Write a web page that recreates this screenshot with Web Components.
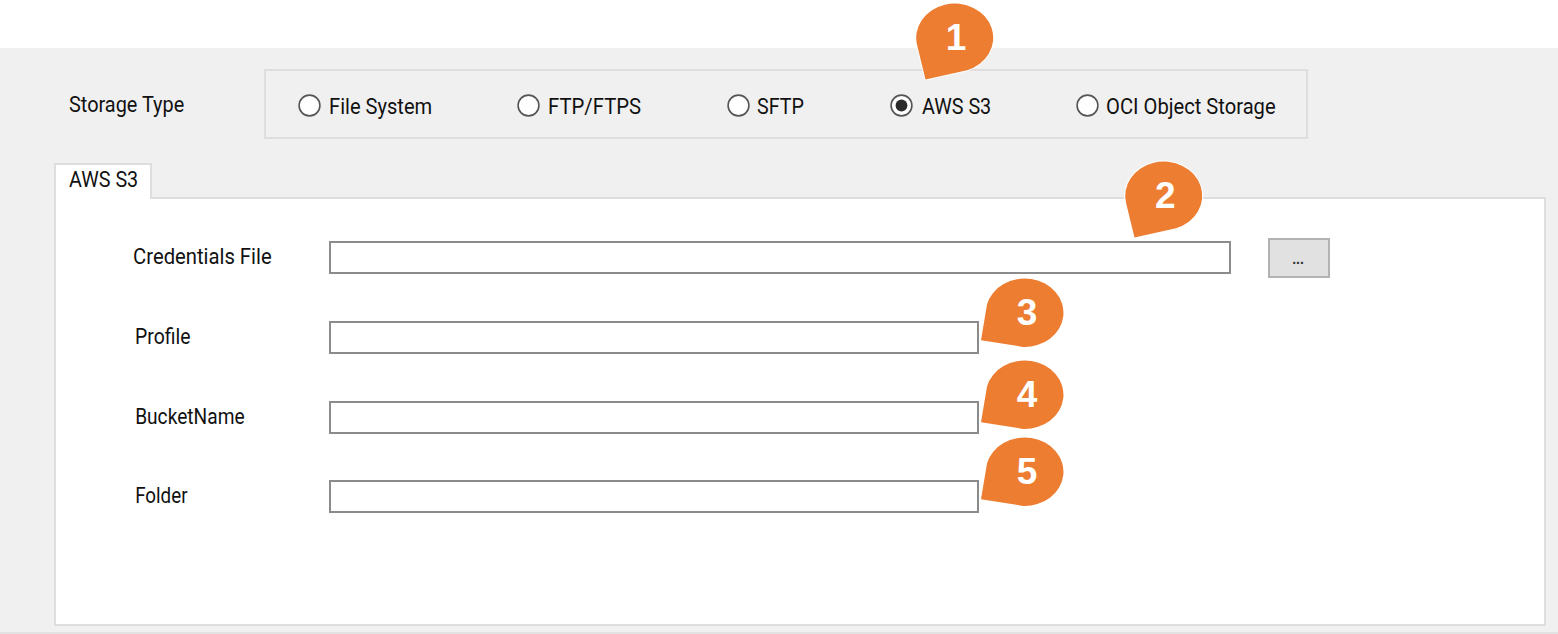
<!DOCTYPE html>
<html lang="en">
<head>
<meta charset="utf-8">
<title>Storage settings</title>
<style>
html,body{margin:0;height:100%;overflow:hidden;background:#fff}
</style>
</head>
<body>
<storage-page></storage-page>
<script>
const define=(name,html,setup)=>{
  const t=document.createElement('template');
  t.innerHTML=html;
  customElements.define(name,class extends HTMLElement{
    constructor(){super();this.attachShadow({mode:'open'}).appendChild(t.content.cloneNode(true));}
    connectedCallback(){if(setup)setup(this,this.shadowRoot);}
  });
};

/* One-line caption condensed so that its ink spans exactly `w` pixels. */
const ctx=document.createElement('canvas').getContext('2d');
define('fit-label',`<style>
:host{display:block;height:26px;font:22px/26px Roboto,"Liberation Sans",sans-serif;color:#111;white-space:pre;flex:none}
span{display:inline-block;transform-origin:0 0}
</style><span><slot></slot></span>`,(el,root)=>{
  const w=+el.getAttribute('w');
  ctx.font='22px Roboto, "Liberation Sans", sans-serif';
  const m=ctx.measureText(el.textContent);
  const s=w/(m.actualBoundingBoxLeft+m.actualBoundingBoxRight);
  el.style.width=w+'px';
  root.querySelector('span').style.transform=`translateX(${m.actualBoundingBoxLeft*s}px) scaleX(${s})`;
});

define('radio-option',`<style>
:host{display:flex;align-items:flex-start;position:static}
svg{display:block;flex:none;margin-right:var(--gap,9px)}
.dot{display:none}
:host([checked]) .dot{display:block}
</style><svg width="23" height="23" viewBox="0 0 23 23"><circle cx="11.5" cy="11.5" r="10.4" fill="#fff" stroke="#555" stroke-width="1.6"/><circle class="dot" cx="11.5" cy="11.5" r="5.9" fill="#2b2b2b"/></svg><slot></slot>`);

define('option-group',`<style>
:host{display:grid;grid-template-columns:219.5px 209.5px 163.3px 185.9px auto;box-sizing:border-box;width:1044px;height:70px;border:2px solid #dedede;padding:23px 0 0 31.5px;align-items:start}
</style><slot></slot>`);

define('text-field',`<style>
:host{display:block;box-sizing:border-box;height:33px;border:2px solid #8b8b8b;background:#fff}
</style>`,el=>{el.style.width=el.getAttribute('w')+'px';});

define('browse-button',`<style>
:host{display:flex;justify-content:center;box-sizing:border-box;width:62px;height:40px;margin:-3px 0 0 37px;border:2px solid #b2b2b2;background:#e1e1e1;font:bold 14px/39px "Liberation Sans",sans-serif;color:#333;padding-right:2px}
</style><slot></slot>`);

define('form-row',`<style>
:host{display:flex;align-items:flex-start}
.cap{flex:none;width:195px;padding-top:3px}
</style><div class="cap"><slot name="label"></slot></div><slot></slot>`);

define('tab-panel',`<style>
:host{display:block;width:1492px}
.tab{position:relative;z-index:1;box-sizing:border-box;width:98px;height:36px;margin-bottom:-2px;border:2px solid #dedede;border-bottom:0;background:#fff;padding:2px 0 0 13px}
.pane{box-sizing:border-box;height:429px;border:2px solid #dedede;background:#fff;padding:42px 0 0 78px;display:flex;flex-direction:column}
</style><div class="tab"><slot name="tab"></slot></div><div class="pane"><slot></slot></div>`);

/* Numbered callout; `tip` chooses which way the point leans. */
define('call-out',`<style>
:host{position:absolute;display:block;width:90px;height:86px}
svg{position:absolute;inset:0;overflow:visible}
path{fill:#ed7d31;stroke:#fff;stroke-opacity:.85;stroke-width:2;paint-order:stroke}
.side{display:none}
:host([tip=side]) .side{display:block}
:host([tip=side]) .down{display:none}
b{position:absolute;left:1px;top:13px;width:78px;text-align:center;font:bold 37px/42px "Liberation Sans",Arial,sans-serif;color:#fff}
:host([tip=side]) b{left:7px}
</style><svg width="90" height="86">
<path class="down" d="M9.5 75.5L1.2 41.5A38.5 34.2 0 1 1 51 66.2Z"/>
<path class="side" d="M0 61.2L6 25.5A38.8 34.2 0 1 1 42 67.9Z"/></svg><b><slot></slot></b>`,el=>{
  el.style.left=el.getAttribute('x')+'px';el.style.top=el.getAttribute('y')+'px';
});

define('storage-page',`<style>
:host{display:block;position:relative;width:1558px;height:634px;box-sizing:border-box;padding-top:48px;background:#fff;overflow:hidden}
main{box-sizing:border-box;height:586px;background:#f0f0f0;border-bottom:2px solid #e2e2e2;padding:21px 0 0 54px}
.top{display:flex;height:94px;align-items:flex-start;padding-left:15px}
.top>fit-label{margin:23px 79px 0 0}
form-row{height:80px}
form-row.short{height:79px}
.in{margin-left:2px}
</style>
<main>
<div class="top"><fit-label w="115">Storage Type</fit-label>
<option-group style="margin-left:1px">
<radio-option><fit-label w="101">File System</fit-label></radio-option>
<radio-option><fit-label w="92">FTP/FTPS</fit-label></radio-option>
<radio-option style="--gap:7px"><fit-label w="47">SFTP</fit-label></radio-option>
<radio-option checked><fit-label w="68">AWS S3</fit-label></radio-option>
<radio-option style="--gap:8px"><fit-label w="168">OCI Object Storage</fit-label></radio-option>
</option-group></div>
<tab-panel>
<fit-label slot="tab" w="68">AWS S3</fit-label>
<form-row><fit-label slot="label" w="137">Credentials File</fit-label><text-field w="902"></text-field><browse-button>...</browse-button></form-row>
<form-row><fit-label slot="label" class="in" w="54">Profile</fit-label><text-field w="650"></text-field></form-row>
<form-row class="short"><fit-label slot="label" class="in" w="108">BucketName</fit-label><text-field w="650"></text-field></form-row>
<form-row><fit-label slot="label" class="in" w="52">Folder</fit-label><text-field w="650"></text-field></form-row>
</tab-panel>
</main>
<call-out x="916" y="4">1</call-out>
<call-out x="1125.3" y="162">2</call-out>
<call-out tip="side" x="981" y="279">3</call-out>
<call-out tip="side" x="981" y="360.5">4</call-out>
<call-out tip="side" x="981" y="437.7">5</call-out>`);
</script>
</body>
</html>
